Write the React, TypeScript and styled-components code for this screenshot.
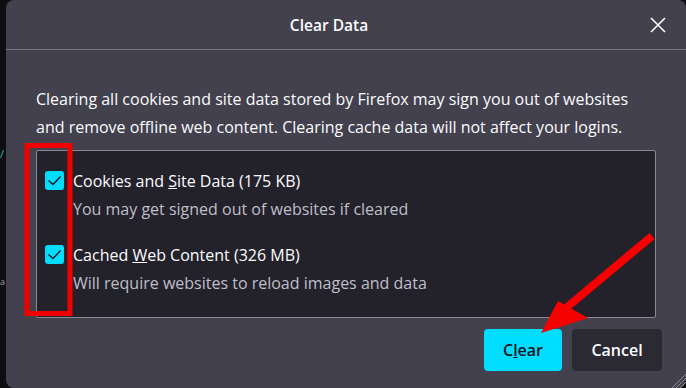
import React from "react";
import styled, { createGlobalStyle } from "styled-components";

const Global = createGlobalStyle`
  html, body { margin: 0; padding: 0; background: #0e0e12; }
  body { width: 686px; height: 388px; overflow: hidden; font-family: "Open Sans", "Noto Sans", sans-serif; }
`;

const Screen = styled.div`
  position: relative;
  display: flex;
  width: 686px;
  height: 388px;
  background: #0e0e12;
`;

const Backdrop = styled.div`
  width: 6px;
  flex: none;
  display: flex;
  flex-direction: column;
  padding-top: 146px;
  gap: 112px;
`;

const Peek = styled.span<{ $color: string; $size: number }>`
  color: ${(p) => p.$color};
  font-size: ${(p) => p.$size}px;
  line-height: 16px;
`;

const Dialog = styled.div`
  flex: 1;
  display: flex;
  flex-direction: column;
  background: #42414d;
  border-radius: 8px;
  color: #fbfbfe;
`;

const Header = styled.div`
  height: 50px;
  flex: none;
  display: grid;
  grid-template-columns: 60px 1fr 60px;
  align-items: center;
  border-bottom: 1px solid #76757f;
  box-sizing: border-box;
`;

const Title = styled.div`
  grid-column: 2;
  text-align: center;
  font-size: 15.5px;
  font-weight: 600;
  padding-right: 34px;
`;

const Close = styled.div`
  display: flex;
  justify-content: flex-end;
  padding-right: 20px;
  padding-top: 1px;
`;

const Body = styled.div`
  display: flex;
  flex-direction: column;
  padding: 35px 30px 0 30px;
`;

const Intro = styled.p`
  margin: 0;
  font-size: 16px;
  line-height: 28px;
  color: #fbfbfe;
  white-space: nowrap;
`;

const List = styled.div`
  margin-top: 9px;
  height: 168px;
  box-sizing: border-box;
  border: 1px solid #8a8993;
  border-radius: 2px;
  background: #23222b;
  padding: 19px 0 0 8px;
  display: flex;
  flex-direction: column;
  gap: 24px;
`;

const Item = styled.div`
  display: grid;
  grid-template-columns: 19px 1fr;
  column-gap: 9px;
  align-items: start;
`;

const Box = styled.div`
  width: 19px;
  height: 19px;
  border-radius: 3px;
  background: #00ddff;
  display: flex;
  align-items: center;
  justify-content: center;
  margin-top: 1px;
`;

const Label = styled.div`
  font-size: 16px;
  line-height: 22px;
  color: #fbfbfe;
`;

const Desc = styled.div`
  grid-column: 2;
  font-size: 16px;
  line-height: 22px;
  margin-top: 6px;
  color: #bfbfc9;
`;

const Footer = styled.div`
  display: flex;
  justify-content: flex-end;
  gap: 10px;
  padding: 11px 24px 0 0;
`;

const Button = styled.button<{ $primary?: boolean }>`
  height: 42px;
  border: none;
  border-radius: 4px;
  padding: 0;
  width: ${(p) => (p.$primary ? "78px" : "90px")};
  background: ${(p) => (p.$primary ? "#00ddff" : "#2b2a33")};
  color: ${(p) => (p.$primary ? "#15141a" : "#fbfbfe")};
  font-family: "Open Sans", "Noto Sans", sans-serif;
  font-size: 16px;
  font-weight: 600;
`;

const Overlay = styled.svg`
  position: absolute;
  left: 0;
  top: 0;
  pointer-events: none;
`;

const Check = () => (
  <svg width="19" height="19" viewBox="0 0 19 19">
    <path d="M3.5 9.5 L8 13.5 L15.5 5.5" fill="none" stroke="#15141a" strokeWidth="1.4" />
  </svg>
);

const X = () => (
  <svg width="16" height="16" viewBox="0 0 16 16">
    <path d="M1 1 L15 15 M15 1 L1 15" stroke="#fbfbfe" strokeWidth="1.6" />
  </svg>
);

export default function App() {
  return (
    <>
      <Global />
      <Screen>
        <Backdrop>
          <Peek $color="#2ab7c4" $size={11}>/</Peek>
          <Peek $color="#9c9ca6" $size={9}>a</Peek>
        </Backdrop>
        <Dialog>
          <Header>
            <Title>Clear Data</Title>
            <Close>
              <X />
            </Close>
          </Header>
          <Body>
            <Intro>
              Clearing all cookies and site data stored by Firefox may sign you out of websites
              <br />
              and remove offline web content. Clearing cache data will not affect your logins.
            </Intro>
            <List>
              <Item>
                <Box>
                  <Check />
                </Box>
                <Label>
                  Cookies and <u>S</u>ite Data (175 KB)
                </Label>
                <Desc>You may get signed out of websites if cleared</Desc>
              </Item>
              <Item>
                <Box>
                  <Check />
                </Box>
                <Label>
                  Cached <u>W</u>eb Content (326 MB)
                </Label>
                <Desc>Will require websites to reload images and data</Desc>
              </Item>
            </List>
          </Body>
          <Footer>
            <Button $primary>
              C<u>l</u>ear
            </Button>
            <Button>Cancel</Button>
          </Footer>
        </Dialog>
        <Overlay width="686" height="388" viewBox="0 0 686 388">
          <rect x="27" y="145.5" width="43" height="168" fill="none" stroke="#f20000" strokeWidth="5" />
          <line x1="652" y1="236" x2="566" y2="308" stroke="#f60000" strokeWidth="8" />
          <polygon points="541,333 558,301 588,318" fill="#f60000" />
          <g stroke="#8a8993" strokeWidth="1">
            <line x1="672" y1="388" x2="686" y2="374" />
            <line x1="676" y1="388" x2="686" y2="378" />
            <line x1="680" y1="388" x2="686" y2="382" />
          </g>
        </Overlay>
      </Screen>
    </>
  );
}
